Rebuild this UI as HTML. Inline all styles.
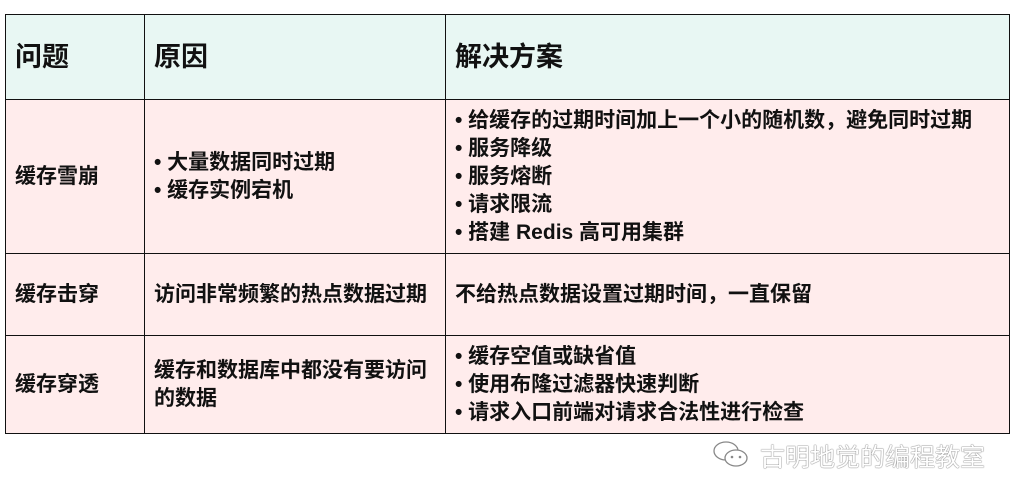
<!DOCTYPE html>
<html><head><meta charset="utf-8"><style>
body{margin:0;width:1016px;height:499px;background:#fff;position:relative;overflow:hidden;font-family:"Liberation Sans","Noto Sans CJK SC",sans-serif;}
table{position:absolute;left:5px;top:14px;border-collapse:collapse;}
td{border:1.5px solid #111;padding:0 0 0 9px;font-weight:bold;color:#111;font-size:21px;line-height:28px;vertical-align:middle;background:#ffecec;}
tr.h td{background:#e8f7f3;font-size:27px;height:84px;}
.wm{position:absolute;left:760px;top:438px;font-size:25px;color:#fff;text-shadow:0 0 1px #666,0 0 1px #666;}
</style></head><body>
<table>
<tr class="h"><td style="width:129px">问题</td><td style="width:291px">原因</td><td style="width:554px">解决方案</td></tr>
<tr style="height:154px"><td>缓存雪崩</td><td>• 大量数据同时过期<br>• 缓存实例宕机</td><td>• 给缓存的过期时间加上一个小的随机数，避免同时过期<br>• 服务降级<br>• 服务熔断<br>• 请求限流<br>• 搭建 Redis 高可用集群</td></tr>
<tr style="height:82px"><td>缓存击穿</td><td>访问非常频繁的热点数据过期</td><td>不给热点数据设置过期时间，一直保留</td></tr>
<tr style="height:98px"><td>缓存穿透</td><td>缓存和数据库中都没有要访问<br>的数据</td><td>• 缓存空值或缺省值<br>• 使用布隆过滤器快速判断<br>• 请求入口前端对请求合法性进行检查</td></tr>
</table>
<svg style="position:absolute;left:712px;top:440px" width="40" height="30" viewBox="0 0 40 30"><ellipse cx="14" cy="11" rx="12" ry="9" fill="#fff" stroke="#888" stroke-width="1.3"/><ellipse cx="24" cy="18" rx="11" ry="8" fill="#fff" stroke="#888" stroke-width="1.3"/><circle cx="20" cy="17" r="1.3" fill="#888"/><circle cx="28" cy="17" r="1.3" fill="#888"/></svg>
<div class="wm">古明地觉的编程教室</div>
</body></html>
